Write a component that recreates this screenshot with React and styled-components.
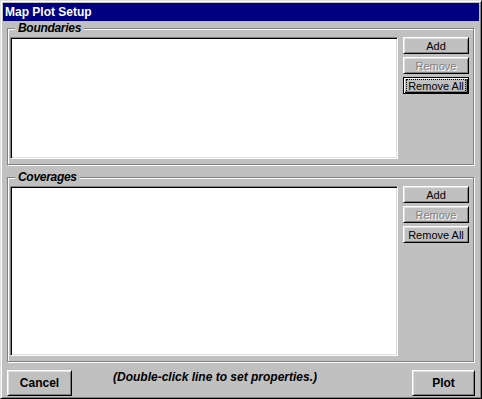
import React from 'react';
import styled, { createGlobalStyle } from 'styled-components';

const GlobalStyle = createGlobalStyle`
    html, body {
        margin: 0;
        padding: 0;
        background: #c0c0c0;
    }
    * {
        box-sizing: border-box;
    }
`;

const Window = styled.div`
    width: 482px;
    height: 399px;
    display: flex;
    flex-direction: column;
    padding: 2px;
    background: #c0c0c0;
    border: 1px solid;
    border-color: #dfdfdf #000 #000 #dfdfdf;
    box-shadow: inset 1px 1px 0 #fff, inset -1px -1px 0 #808080;
    font-family: "Liberation Sans", Arial, sans-serif;
`;

const TitleBar = styled.div`
    height: 18px;
    flex: none;
    background: #000080;
    color: #fff;
    font-weight: bold;
    font-size: 12px;
    line-height: 18px;
    padding-left: 2px;
    white-space: nowrap;
`;

const Body = styled.div`
    flex: 1;
    display: flex;
    flex-direction: column;
    padding: 0 4px;
`;

const Group = styled.fieldset`
    margin: ${p => p.$first ? '0' : '5px'} 1px 0 0;
    padding: 2px 4px 5px 2px;
    border: 1px solid #808080;
    box-shadow: inset 1px 1px 0 #fff, 1px 1px 0 #fff;
    min-width: 0;
    display: flex;
    gap: 5px;
`;

const Legend = styled.legend`
    margin-left: 5px;
    padding: 0 3px;
    background: #c0c0c0;
    font-size: 12px;
    line-height: 14px;
    font-weight: bold;
    font-style: italic;
    letter-spacing: -0.3px;
    color: #000;
`;

const ListBox = styled.div`
    flex: 1;
    height: ${p => p.$h}px;
    background: #fff;
    border: 1px solid;
    border-color: #808080 #fff #fff #808080;
    box-shadow: inset 1px 1px 0 #000, inset -1px -1px 0 #dfdfdf;
`;

const ButtonColumn = styled.div`
    width: 66px;
    flex: none;
    display: flex;
    flex-direction: column;
    gap: 3px;
`;

const Button = styled.button`
    width: ${p => p.$w || 66}px;
    height: ${p => p.$h || 17}px;
    padding: 0;
    margin: 0;
    background: #c0c0c0;
    font-family: "Liberation Sans", Arial, sans-serif;
    font-size: ${p => p.$bold ? 12 : 11}px;
    font-weight: ${p => p.$bold ? 'bold' : 'normal'};
    color: ${p => p.disabled ? '#808080' : '#000'};
    text-shadow: ${p => p.disabled ? '1px 1px 0 #fff' : 'none'};
    border: 1px solid;
    border-color: ${p => p.$focus ? '#000' : '#fff #000 #000 #fff'};
    box-shadow: ${p => p.$focus
        ? 'inset 1px 1px 0 #fff, inset -1px -1px 0 #000, inset -2px -2px 0 #808080'
        : 'inset 1px 1px 0 #dfdfdf, inset -1px -1px 0 #808080'};
    display: flex;
    align-items: center;
    justify-content: center;
    cursor: default;
`;

const FocusRect = styled.span`
    outline: 1px dotted #000;
    outline-offset: 0;
    padding: 0 1px;
    line-height: 12px;
`;

const Footer = styled.div`
    display: flex;
    align-items: flex-start;
    margin-top: 8px;
`;

const Hint = styled.div`
    margin-left: 41px;
    flex: 1;
    font-size: 12px;
    line-height: 14px;
    font-weight: bold;
    font-style: italic;
    color: #000;
    white-space: nowrap;
`;

const ListGroup = ({ title, height, focusRemoveAll, first }) => (
    <Group $first={first}>
        <Legend>{title}</Legend>
        <ListBox $h={height} />
        <ButtonColumn>
            <Button>Add</Button>
            <Button disabled>Remove</Button>
            <Button $focus={focusRemoveAll}>
                {focusRemoveAll ? <FocusRect>Remove All</FocusRect> : 'Remove All'}
            </Button>
        </ButtonColumn>
    </Group>
);

const App = () => {
    return (
        <>
            <GlobalStyle />
            <Window>
                <TitleBar>Map Plot Setup</TitleBar>
                <Body>
                    <ListGroup title="Boundaries" height={122} focusRemoveAll first />
                    <ListGroup title="Coverages" height={170} />
                    <Footer>
                        <Button $bold $w={65} $h={26}>Cancel</Button>
                        <Hint>(Double-click line to set properties.)</Hint>
                        <Button $bold $w={63} $h={26}>Plot</Button>
                    </Footer>
                </Body>
            </Window>
        </>
    );
};

export default App;
